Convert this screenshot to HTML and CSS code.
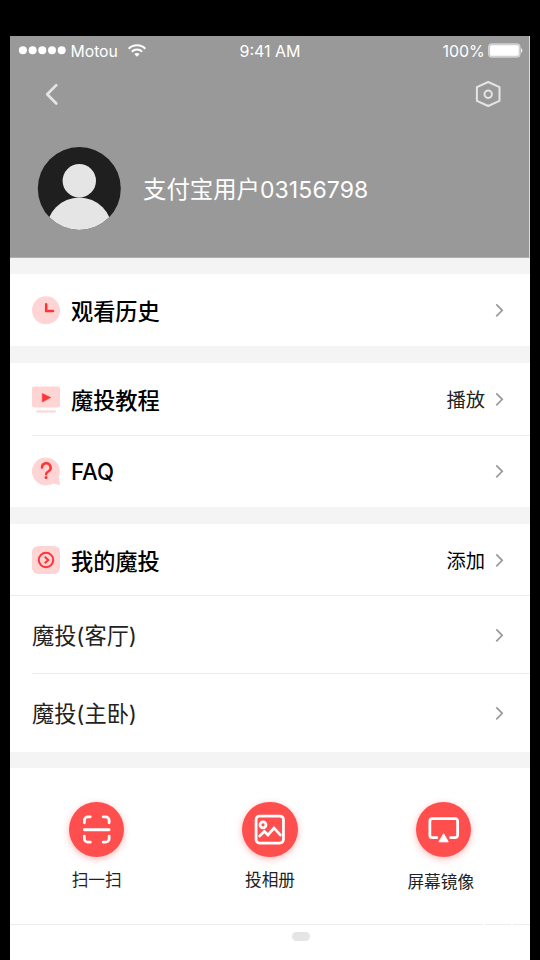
FILE: index.html
```html
<!DOCTYPE html>
<html lang="zh-CN">
<head>
<meta charset="utf-8">
<title>我的</title>
<link rel="stylesheet" href="styles.css">
</head>
<body>
<svg width="0" height="0" class="defs"><defs>
  <symbol id="chev" viewBox="0 0 10 16"><path d="M1.300 2.300 7.200 8.300 1.300 14.300" fill="none" stroke="#999" stroke-width="1.700"/></symbol>
</defs></svg>
<main class="phone">
  <header class="hero">
    <div class="status">
      <div class="carrier">
        <svg width="48" height="10" viewBox="0 0 48 10" fill="#fff"><circle cx="4.9" cy="5.200" r="4"/><circle cx="14.6" cy="5.200" r="4"/><circle cx="24.3" cy="5.200" r="4"/><circle cx="34" cy="5.200" r="4"/><circle cx="43.7" cy="5.200" r="4"/></svg>
        <span class="network">Motou</span>
        <svg class="wifi" width="18" height="13" viewBox="0 0 18 13" fill="none" stroke="#fff" stroke-width="2"><path d="M.7 4.7C5.3.1 12.7.1 17.3 4.7"/><path d="M3.8 7.7c2.9-2.9 7.5-2.9 10.4 0"/><path d="M9 12.8 6.3 10c1.5-1.5 3.9-1.5 5.4 0z" fill="#fff" stroke="none"/></svg>
      </div>
      <span class="time">9:41 AM</span>
      <div class="power">
        <span>100%</span>
        <svg width="35" height="15" viewBox="0 0 35 15"><rect x=".7" y=".9" width="31.3" height="13.2" rx="2.5" fill="#c6c6c6" stroke="#dedede"/><rect x="2" y="2.2" width="28.7" height="10.6" rx="1.5" fill="#fff"/><path d="M33 5.2c1.8.3 1.8 4.3 0 4.6z" fill="#eee"/></svg>
      </div>
    </div>
    <nav class="nav">
      <svg width="14" height="24" viewBox="0 0 14 24"><path d="M11.3 3.100 2.200 12.300l9.100 9.200" fill="none" stroke="#e5e5e5" stroke-width="2.700" stroke-linecap="round" stroke-linejoin="round"/></svg>
      <svg width="26" height="28" viewBox="0 0 26 28" fill="none" stroke="#e5e5e5" stroke-width="2" stroke-linejoin="round"><path d="M13.2 2 24.500 7.200V20.800L13.200 26 1.900 20.800V7.200z"/><circle cx="13.200" cy="14.200" r="3.700"/></svg>
    </nav>
    <section class="profile">
      <svg width="84" height="84" viewBox="0 0 84 84"><defs><clipPath id="disc"><circle cx="42.300" cy="42.500" r="41.500"/></clipPath></defs><g clip-path="url(#disc)"><path d="M0 0h84v84H0z" fill="#1f1f1f"/><g fill="#e5e5e5"><circle cx="42.300" cy="34.800" r="16.700"/><circle cx="42.300" cy="84.600" r="33"/></g></g></svg>
      <span class="name">支付宝用户<span class="digits">03156798</span></span>
    </section>
  </header>

  <section class="group">
    <a class="row"><svg class="icon" viewBox="0 0 28 28"><circle cx="14" cy="14.300" r="14" fill="#ffd4d4"/><path d="M14.200 8.200v6.900h6.700" fill="none" stroke="#ff3535" stroke-width="2.500" stroke-linecap="round"/></svg><b>观看历史</b><svg class="chev"><use href="#chev"/></svg></a>
  </section>
  <section class="group">
    <a class="row line tutorial"><svg class="icon" viewBox="0 0 28 28"><rect y="1.600" width="28" height="21" rx="2" fill="#ffd4d4"/><rect x="4" y="25.400" width="20" height="2" rx="1" fill="#ffd4d4"/><path d="M10.300 8.400 18.700 12.600l-8.400 4.400z" fill="#ff3535" stroke="#ff3535" stroke-width=".6" stroke-linejoin="round"/></svg><b>魔投教程</b><span class="action">播放</span><svg class="chev"><use href="#chev"/></svg></a>
    <a class="row faq"><svg class="icon" viewBox="0 0 28 28"><path d="M14 .4a14 14 0 1 0 7.200 26L28 28l-1.300-8A14 14 0 0 0 14 .4z" fill="#ffd4d4"/><path d="M10 10.600a4.300 4.300 0 1 1 6.500 3.600c-1.600 1-2.400 1.700-2.400 3" fill="none" stroke="#ff3535" stroke-width="2.500" stroke-linecap="round"/><circle cx="14" cy="20.600" r="1.500" fill="#ff3535"/></svg><b class="latin">FAQ</b><svg class="chev"><use href="#chev"/></svg></a>
  </section>
  <section class="group">
    <a class="row full"><svg class="icon" viewBox="0 0 28 28"><rect width="28" height="28" rx="6" fill="#ffd4d4"/><g fill="none" stroke="#ff3535" stroke-width="2"><circle cx="14" cy="14" r="7.200"/><path d="m12.800 10.700 3.400 3.300-3.400 3.300"/></g></svg><b>我的魔投</b><span class="action dark">添加</span><svg class="chev"><use href="#chev"/></svg></a>
    <a class="row device line"><span>魔投(客厅)</span><svg class="chev"><use href="#chev"/></svg></a>
    <a class="row device"><span>魔投(主卧)</span><svg class="chev"><use href="#chev"/></svg></a>
  </section>
  <section class="group tools">
    <a class="tool"><i class="disc"><svg viewBox="0 0 56 56"><path d="M15.500 21v-2.500a3.500 3.500 0 0 1 3.500-3.500h2.500M34.500 15H37a3.500 3.500 0 0 1 3.500 3.500V21M40.500 34.500V37a3.500 3.500 0 0 1-3.500 3.500h-2.500M21.500 40.500H19a3.500 3.500 0 0 1-3.500-3.500v-2.500M15.500 28h25"/></svg></i><span>扫一扫</span></a>
    <a class="tool"><i class="disc"><svg viewBox="0 0 56 56"><rect x="14.200" y="14.200" width="27.600" height="27.200" rx="3.500"/><circle cx="21.200" cy="23" r="3"/><path d="m17.800 34.300 4.700-4.600 3.700 3.500 6.100-6.800 6.400 6.800" stroke-linejoin="miter"/></svg></i><span>投相册</span></a>
    <a class="tool mirror"><i class="disc"><svg viewBox="0 0 56 56"><path d="M21 36h-4.500a2.500 2.500 0 0 1-2.500-2.500V19.200a2.500 2.500 0 0 1 2.500-2.500h23a2.500 2.500 0 0 1 2.500 2.500v14.300a2.500 2.500 0 0 1-2.500 2.500H35"/><path d="M28 32.400 32.600 40.200h-9.200z" fill="#fff" stroke-width="1"/></svg></i><span>屏幕镜像</span></a>
  </section>
  <footer class="dock">
    <div class="rule"><i></i><i></i><i></i></div>
    <div class="grip"></div>
  </footer>
</main>
</body>
</html>
```

FILE: styles.css
```css
* { box-sizing: border-box; }
body { margin: 0; background: #000; font-family: Inter, "Noto Sans CJK SC", sans-serif; }
.defs { display: block; }
svg { display: block; flex: none; }
.phone { width: 520px; height: 924px; margin: 36px 10px 0; background: #f4f4f4; overflow: hidden; display: flex; flex-direction: column; }
.hero { height: 222px; flex: none; background: #999; border-right: 1px solid #ddd; border-bottom: 1px solid #b0b0b0; color: #fff; }
.status { height: 30px; padding: 0 6px 0 8px; display: grid; grid-template-columns: 1fr auto 1fr; align-items: center; font-size: 16px; line-height: 30px; }
.carrier, .power { display: flex; align-items: center; height: 30px; }
.carrier svg { margin-top: -2px; }
.network { margin-left: 4.500px; font-size: 15.800px; line-height: 30px; padding-top: 1px; letter-spacing: -.05px; }
.carrier .wifi { margin-left: 10.500px; }
.time { margin-left: -1px; }
.power { justify-content: flex-end; gap: 3.500px; letter-spacing: -.1px; }
.power svg { margin-top: -1px; }
.nav { height: 56px; padding: 0 28px 0 35px; display: flex; align-items: center; justify-content: space-between; }
.profile { height: 132px; padding: 0 27px; display: flex; align-items: center; gap: 22px; }
.name { font-size: 23.400px; line-height: 34px; font-weight: 400; white-space: nowrap; padding-top: 3px; }
.digits { font-size: 23px; letter-spacing: .1px; }
.group { flex: none; background: #fff; margin-top: 16.600px; }
.hero + .group { margin-top: 16px; }
.row { height: 72px; padding: 0 25px 0 22px; display: flex; align-items: center; color: #000; position: relative; }
.row.tutorial { height: 72.500px; }
.line::after, .full::after { content: ""; position: absolute; right: 0; bottom: 0; left: 22px; height: 1px; background: #ececec; }
.tutorial::after { bottom: -.5px; }
.full::after { left: 0; }
.icon { width: 28px; height: 28px; margin-right: 11px; overflow: visible; }
.row b { font-size: 22.200px; font-weight: 500; line-height: 32px; padding-top: 3px; }
.row.tutorial b, .row.full b { padding-top: 5px; }
.row b.latin { padding-top: 2px; }
.chev { width: 10px; height: 16px; margin-left: auto; }
.action { margin-left: auto; font-size: 19.300px; color: #222; }
.action.dark { color: #000; }
.action + .chev { margin-left: 10px; }
.device { height: 78px; font-size: 22.200px; color: #222; }
.device span { padding-bottom: 1px; }
.tools { height: 156px; padding: 33.500px 0 0; display: flex; justify-content: space-between; }
.tool { width: 173.330px; display: flex; flex-direction: column; align-items: center; font-size: 16.700px; line-height: 24px; color: #222; }
.disc { width: 55.500px; height: 55.500px; border-radius: 50%; background: #ff4e4e; box-shadow: 0 2px 7px #ff4e4e66; margin-bottom: 10.500px; }
.disc svg { width: 55.500px; height: 55.500px; fill: none; stroke: #fff; stroke-width: 2.800; stroke-linecap: round; stroke-linejoin: round; }
.mirror span { margin: 2px 5px 0 0; }
.dock { flex: 1; background: #fff; }
.rule { display: flex; gap: 2px; height: 1px; }
.rule i { background: #ececec; flex: 1; }
.rule i:first-child { flex: none; width: 473px; }
.rule i:nth-child(2) { flex: none; width: 26px; }
.grip { width: 18px; height: 9px; border-radius: 5px; background: #e5e5e5; margin: 7px auto 0; position: relative; left: 31px; }
```
